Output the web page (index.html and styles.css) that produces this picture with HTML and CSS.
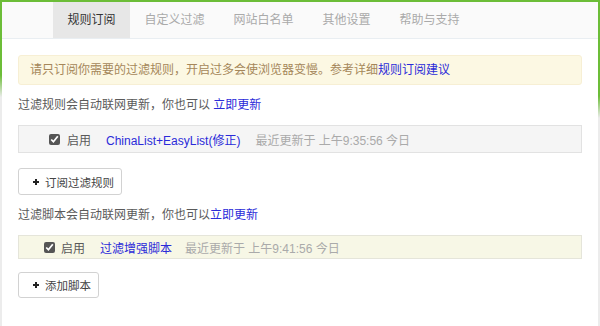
FILE: index.html
```html
<!DOCTYPE html>
<html>
<head>
  <meta charset="utf-8">
  <title>规则订阅</title>
  <link rel="stylesheet" href="styles.css">
</head>
<body>

<div class="panel">
  <ul class="tabs">
    <li class="active">规则订阅</li>
    <li>自定义过滤</li>
    <li>网站白名单</li>
    <li>其他设置</li>
    <li>帮助与支持</li>
  </ul>

  <div class="content">
    <div class="alert">
      请只订阅你需要的过滤规则，开启过多会使浏览器变慢。参考详细<a href="#">规则订阅建议</a>
    </div>

    <p class="note">过滤规则会自动联网更新，你也可以 <a href="#">立即更新</a></p>

    <div class="row rule">
      <label><input type="checkbox" checked>启用</label>
      <a class="name" href="#">ChinaList+EasyList(修正)</a>
      <span class="time">最近更新于 上午9:35:56 今日</span>
    </div>

    <button class="add rule-add">
      <svg width="6" height="6" viewBox="0 0 6 6"><path d="M3 0v6M0 3h6" stroke="#222" stroke-width="2"/></svg>
      订阅过滤规则
    </button>

    <p class="note">过滤脚本会自动联网更新，你也可以<a href="#">立即更新</a></p>

    <div class="row script">
      <label><input type="checkbox" checked>启用</label>
      <a class="name" href="#">过滤增强脚本</a>
      <span class="time">最近更新于 上午9:41:56 今日</span>
    </div>

    <button class="add script-add">
      <svg width="6" height="6" viewBox="0 0 6 6"><path d="M3 0v6M0 3h6" stroke="#222" stroke-width="2"/></svg>
      添加脚本
    </button>
  </div>
</div>

</body>
</html>
```

FILE: styles.css
```css
body {
  margin: 0;
  font-family: "Liberation Sans", "Noto Sans CJK SC", sans-serif;
  font-size: 12px;
  color: #5a5a5a;
}

a {
  color: #2b2bd9;
  text-decoration: none;
}

.panel {
  box-sizing: border-box;
  width: 600px;
  min-height: 330px;
  border: 2px solid;
  border-image: linear-gradient(182deg, #6cbd38 0, #6cbd38 96px, #ececec 118px) 2;
}

.tabs {
  list-style: none;
  margin: 0;
  padding: 0 0 0 51px;
  display: flex;
  height: 36px;
  background-color: #fafafa;
  border-bottom: 1px solid #e9eef2;
}
.tabs li {
  padding: 0 14.5px;
  line-height: 36px;
  color: #aaa;
}
.tabs li.active {
  background-color: #e7e7e7;
  color: #333;
}

.content {
  padding: 16px 16px 20px 16px;
}

.alert {
  height: 28px;
  line-height: 28px;
  padding: 0 11px;
  background-color: #fcf8e3;
  border: 1px solid #f7efd4;
  border-radius: 3px;
  color: #a5875a;
}

.note {
  margin: 10px 0;
  line-height: 20px;
}

.row {
  display: flex;
  align-items: center;
  box-sizing: border-box;
  border: 1px solid #e2e2e2;
  white-space: nowrap;
}
.row label {
  display: flex;
  align-items: center;
  gap: 7px;
}
.row input {
  margin: 0;
  width: 11px;
  height: 11px;
  accent-color: #555;
}
.row .name {
  margin-left: 15px;
}
.row .time {
  margin-left: 15px;
  color: #aaa;
}

.rule {
  height: 28px;
  padding-left: 30px;
  background-color: #f5f5f5;
}

.script {
  height: 24px;
  margin-top: 9px;
  padding-left: 25px;
  background-color: #f7f7e6;
  border-color: #e5e5da;
}
.script label {
  gap: 6px;
}
.script .time {
  margin-left: 13px;
}

.add {
  display: flex;
  align-items: center;
  gap: 6px;
  padding: 0 7px 0 14px;
  background-color: white;
  border: 1px solid #d2d2d2;
  border-radius: 3px;
  font-family: inherit;
  font-size: 11.5px;
  color: #444;
}
.rule-add {
  height: 27px;
  margin-top: 15px;
}
.script-add {
  height: 26px;
  margin-top: 13px;
}
```
